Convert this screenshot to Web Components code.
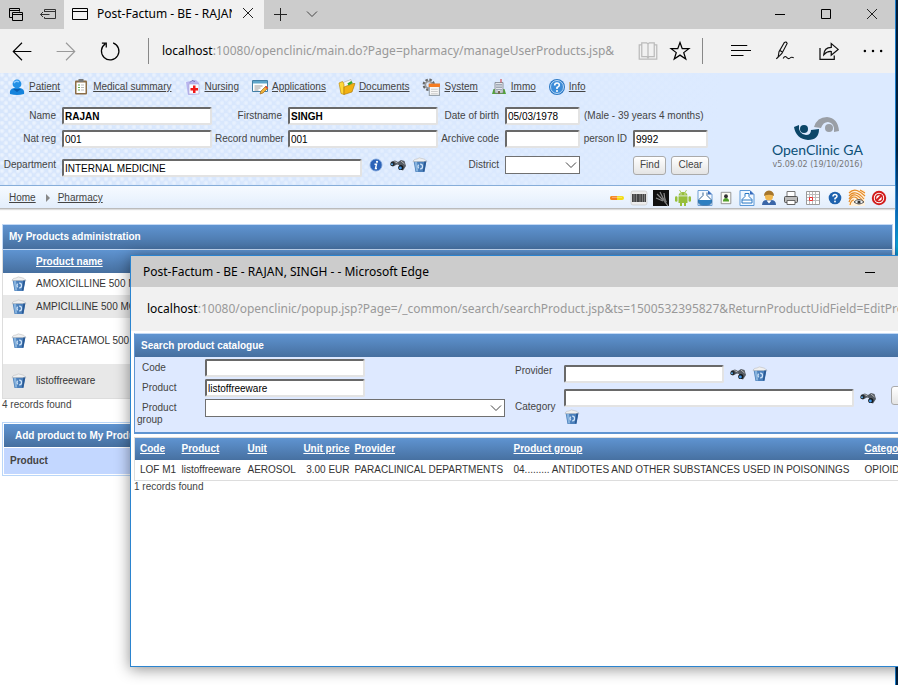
<!DOCTYPE html>
<html lang="en">
<head>
<meta charset="utf-8">
<title>OpenClinic GA</title>
<style>
    html, body {
        margin: 0;
        height: 100%;
        overflow: hidden;
    }

    body {
        font-family: "Liberation Sans", Arial, sans-serif;
        font-size: 10px;
        line-height: 12px;
        color: #444;
        background: linear-gradient(#001c38 0, #00203f 22%, #0a5fae 30%, #0aa0d0 36%, #0a5fae 50%, #00203f 97%);
    }
</style>
</head>
<body>
<desktop-screen>
    <edge-window>
        <edge-tabs title-text="Post-Factum - BE - RAJAN, SINGH"></edge-tabs>
        <edge-toolbar host-name="localhost" path=":10080/openclinic/main.do?Page=pharmacy/manageUserProducts.jsp&amp;"></edge-toolbar>
        <patient-header>
            <clinic-menu></clinic-menu>
            <patient-form></patient-form>
            <clinic-logo slot="logo"></clinic-logo>
        </patient-header>
        <clinic-bar></clinic-bar>
        <product-list></product-list>
        <add-product></add-product>
    </edge-window>
    <edge-popup slot="popup" host-name="localhost" path=":10080/openclinic/popup.jsp?Page=/_common/search/searchProduct.jsp&amp;ts=1500532395827&amp;ReturnProductUidField=EditProductUid">
        <span slot="title">Post-Factum - BE - RAJAN, SINGH - - Microsoft Edge</span>
        <search-form></search-form>
        <search-results></search-results>
    </edge-popup>
</desktop-screen>

<script>
const icons = {
    // browser chrome
    tabsAside: '<g fill="none" stroke="#000"><path d="M4.500 11.500h-3v-9h10v3M1.500 4.500h10"/><path d="M4.500 6.500h10v8h-10zM4.500 8.500h10"/></g>',
    setAside: '<g fill="none" stroke="#333"><path d="M4.500 6V3.500h11v9h-11V11M4.500 5.500h11M.5 8.500h9M3 6L.5 8.500 3 11"/></g>',
    page: '<path d="M.5 2.500h15v11H.5zM.5 5.500h15" fill="none" stroke="#000"/>',
    close: '<path d="M3 3l10 10M13 3L3 13" fill="none" stroke="#222"/>',
    plus: '<path d="M8.500 2v13M2 8.500h13" fill="none" stroke="#222"/>',
    chevron: '<path d="M3 5.500l5 5 5-5" fill="none" stroke="#444"/>',
    minimize: '<path d="M3 8.500h10" fill="none" stroke="#000"/>',
    maximize: '<path d="M3.500 3.500h9v9h-9z" fill="none" stroke="#000"/>',
    back: '<path d="M15.500 8.400H1M8 1.400L1 8.400l7 7" fill="none" stroke="#000" stroke-width=".9"/>',
    forward: '<path d="M.5 8.400H15M8 1.400l7 7-7 7" fill="none" stroke="#999" stroke-width=".9"/>',
    refresh: '<path d="M4.200 2.300A7 7 0 1 0 10.500 1.500M1.500 1.600h3.500v3.600" fill="none" stroke="#000" stroke-width="1"/>',
    book: '<path d="M3 1.500h4l1 1 1-1h4v11H9l-1 1-1-1H3zM8 2.500v11M3 3H1v11.500h14V3h-2" fill="none" stroke="#bbb"/>',
    star: '<path d="M8 1.200l1.800 4.900h5.300L11 9.300l1.600 5.100L8 11.300l-4.600 3.100L5 9.300.9 6.100h5.300z" fill="none" stroke="#000" stroke-width="1"/>',
    hub: '<path d="M0 3.600h13M0 7.600h16M0 11.600h10" fill="none" stroke="#000" stroke-width=".8"/>',
    pen: '<path d="M2.500 13l.700-4.500L7.500 1.200Q9 .2 9.700 2L5.500 10zM4 7.500l2 1.500M1 14.300l1.500-1.500M6.500 14c1.700-3 2.500-1 3.500-.300s1.500.6 2.300-.3 1.500-.4 2.700 0" fill="none" stroke="#111" stroke-width=".9"/>',
    share: '<path d="M.8 5.500v9.200h11.400v-3.200M3.800 11c.2-4 2.700-6 6-6V2l5.500 4.700-5.500 4.600V8.400c-3-.2-4.500.8-6 2.600z" fill="none" stroke="#111" stroke-width="1"/>',
    more: '<g fill="#000"><circle cx="1.500" cy="8" r="1"/><circle cx="8" cy="8" r="1"/><circle cx="14.500" cy="8" r="1"/></g>',

    // main menu
    patient: '<path d="M1 15q-1-5 4-6h6q5 1 4 6-7 2-14 0z" fill="#1583dc"/><circle cx="8" cy="5" r="4.400" fill="#2390e5"/><path d="M5 4q2-3 5-1" stroke="#8ccaff" fill="none" stroke-width="1.500"/><path d="M4 10l4 3 4-3" fill="#0a5eb0"/>',
    clipboard: '<rect x="2" y="1.500" width="12" height="14" rx="1" fill="#8c6d46"/><path d="M3.500 3.500h9v10.500h-9z" fill="#fff"/><path d="M5.500 0h5v3h-5z" fill="#777"/><path d="M5 6h2M5 8.500h2M5 11h2" stroke="#5fae4b"/><path d="M8 6h3M8 8.500h3M8 11h3" stroke="#bbb"/>',
    nursing: '<path d="M1 3l10-2 3 3v11l-11 1z" fill="#b9b5ee"/><path d="M4 5h10v10H4z" fill="#fbfbff" stroke="#a6a3d8" stroke-width=".600"/><path d="M8 6.500h2.500V9H13v2.500h-2.500V14H8v-2.500H5.500V9H8z" fill="#f01818"/><path d="M5 3.500l2-2 3 1" stroke="#7773b8" fill="none"/>',
    applications: '<path d="M.5 1.500h15v11H.5z" fill="#fff" stroke="#437fa5"/><path d="M1 2h14v2.500H1z" fill="#5fa6cb"/><path d="M2.500 7h8M2.500 9h6M2.500 11h4" stroke="#999"/><path d="M8 15l1-3 5-5 2 2-5 5z" fill="#f0b33c" stroke="#a06a1b" stroke-width=".7"/><path d="M13 8l1-1 2 2-1 1z" fill="#d44"/>',
    documents: '<path d="M3 4l9-3.500 2 8-8 4z" fill="#f7f7f7" stroke="#999" stroke-width=".5"/><path d="M0 4l3.500-1.500L5 5v10.500l-3-1z" fill="#ffd83a" stroke="#b98200" stroke-width=".6"/><path d="M5 8l9-3.500h2L13 13l-8 2.500z" fill="#f2b112" stroke="#a87400" stroke-width=".6"/><path d="M9 5.500l4-2.500" stroke="#37a52e" stroke-width="2.500"/>',
    system: '<circle cx="6" cy="6" r="4.200" fill="none" stroke="#666" stroke-width="2.600" stroke-dasharray="2 1.300"/><circle cx="6" cy="6" r="3" fill="none" stroke="#999" stroke-width="1.500"/><rect x="6.500" y="5.500" width="9" height="10" fill="#f6f6f6" stroke="#98a3ad"/><path d="M6 5h10v3H6z" fill="#f47b22"/><path d="M8 10h6M8 12h6M8 14h6" stroke="#ccc"/>',
    immo: '<path d="M1 15l1.500-5h11L15 15z" fill="#52a33a"/><path d="M4 3.500h8V14H4z" fill="#e4e7ec" stroke="#7b818b" stroke-width=".8"/><path d="M6 5v8M8 5v6M10 5v8" stroke="#5d6b80" stroke-dasharray="1.500 1"/><path d="M10 0v3.500" stroke="#c33"/><path d="M7 12h2v3H7z" fill="#765"/>',
    info: '<circle cx="8" cy="8" r="8" fill="#2b78c4"/><circle cx="8" cy="8" r="6.500" fill="#3c8cd8" stroke="#d6ebff" stroke-width=".8"/><path d="M5.700 6.500Q5.700 4 8 4t2.300 2.200Q10.300 7.300 8 8.500V10" fill="none" stroke="#fff" stroke-width="1.600"/><circle cx="8" cy="12" r="1" fill="#fff"/>',

    // form actions
    about: '<circle cx="8" cy="8" r="6" fill="#2c63b8" stroke="#7ea3d8" stroke-width=".8"/><circle cx="9" cy="4.800" r="1.100" fill="#fff"/><path d="M6.500 7.200h2l-1 4.300h1.500" fill="none" stroke="#fff" stroke-width="1.400"/>',
    binoculars: '<path d="M1.500 4.500l3.500-1 3 1.500 3-2 3.500 1L16 9l-3 4.500-4-1.500V8L7 7.500 3 9.500.5 8z" fill="#555b63"/><circle cx="2.500" cy="7" r="2.200" fill="#20262c"/><circle cx="2" cy="7.200" r="1" fill="#5aa9e8"/><circle cx="10.800" cy="10.500" r="2.600" fill="#14181c"/><circle cx="10.400" cy="11" r="1.400" fill="#3d97ea"/><path d="M4.500 4.500l3 1.500M11 4l3.500 3" stroke="#b5b5b5"/>',
    trash: '<path d="M1.500 3.500h13L12.500 15h-9z" fill="#4c80bb"/><path d="M2.500 4.500l1.700 10h2L5 4.500z" fill="#86b2dd"/><path d="M1 4.500Q2 1.500 5 2q2-2 5-.5 3 0 5 3z" fill="#f0f0f0" stroke="#b5b5b5" stroke-width=".500"/><circle cx="8.300" cy="9.500" r="2.300" fill="none" stroke="#cfe3f8" stroke-width="1.300" stroke-dasharray="3.400 1.400"/><path d="M12.300 4.500l-1.500 10h1.500l2-10z" fill="#2a5a95"/>',

    // shortcut bar
    pill: '<rect x="1" y="6" width="14" height="4" rx="2" fill="#f4dc14"/><path d="M8 6H3Q1 6 1 8t2 2h5z" fill="#f5811f"/><path d="M3 7.300h10" stroke="#fff" opacity=".4"/>',
    barcode: '<rect x="0" y="1" width="16" height="14" rx="2" fill="#ececec" stroke="#bbb" stroke-width=".5"/><path d="M1 4h14v8H1z" fill="#444"/><path d="M3 4v8M5.500 4v8M9 4v8M11.500 4v8M13.500 4v8" stroke="#999" stroke-width=".7"/>',
    hand: '<path d="M0 0h16v16H0z" fill="#111"/><path d="M10 11L3 8M10 10L4 4M11 10L7 2M12 10l-1-7M12 12l3 4" stroke="#8a8a8a" stroke-width="1.200" fill="none"/><path d="M9 9l3-1 2 4-2 1z" fill="#777"/>',
    android: '<g fill="#97bf3a"><path d="M3.500 5.500Q4 2 8 2t4.500 3.500z"/><rect x="3.500" y="6.300" width="9" height="6.700"/><rect x="0" y="6.300" width="2.500" height="5.500" rx="1.200"/><rect x="13.500" y="6.300" width="2.500" height="5.500" rx="1.200"/><rect x="5" y="12" width="2" height="4"/><rect x="9" y="12" width="2" height="4"/></g><path d="M4.500 0l1.500 2.500M11.500 0L10 2.500" stroke="#97bf3a" stroke-width=".8"/><path d="M5.500 4h1M9.500 4h1" stroke="#fff"/>',
    flask: '<path d="M1 .5h10l4 4v11H1z" fill="#f4f9ff" stroke="#6c9fd5"/><path d="M11 .5v4h4" fill="#3568bb"/><path d="M6 2.500v3L1.500 10q-1 5 4.500 5h4q5.500 0 4.500-5L10 5.500v-3" fill="#fff" stroke="#33628f"/><path d="M1.300 10h13.400q0 5-4.700 5H6q-4.700 0-4.700-5z" fill="#2e7fc1"/>',
    card: '<path d="M2.500 1.500h11v13h-11z" fill="#fcfcf4" stroke="#888"/><circle cx="8" cy="6" r="2.200" fill="#333"/><path d="M4.500 12q0-4 3.500-4t3.500 4z" fill="#52a02b"/>',
    bottle: '<path d="M1 .5h10l4 4v11H1z" fill="#f0f7ff" stroke="#5a98d8"/><path d="M11 .5v4h4" fill="#3568bb"/><path d="M6 3.500h4v3l3 3v3.500H3V9.500l3-3zM3 10h10" fill="#fff" stroke="#2a79c4"/>',
    nurse: '<path d="M1 15q0-5 5-5h4q5 0 5 5z" fill="#3a66a8"/><circle cx="8" cy="6.500" r="4" fill="#f0b850"/><path d="M3 6Q3 1 8 .5q5 .5 5 5.500Q8 3.500 3 6z" fill="#a5762c"/><path d="M5.500 10.500l2.500 3 2.500-3z" fill="#fff"/>',
    printer: '<path d="M4 1.500h8v5H4z" fill="#fff" stroke="#777"/><rect x="1.500" y="6.500" width="13" height="6" rx="1" fill="#bbb" stroke="#555"/><path d="M4 10.500h8v4H4z" fill="#fff" stroke="#666"/>',
    calendar: '<path d="M1.500 1.500h13v13h-13z" fill="#fff" stroke="#999"/><path d="M2 4.500h12M2 7.500h12M2 10.500h12M4.500 2v12M7.500 2v12M10.500 2v12" stroke="#bbb"/><path d="M4.500 7.500h3v3h-3z" fill="none" stroke="#e33"/>',
    help: '<circle cx="8" cy="8" r="6.300" fill="#1e62ae"/><path d="M6 6.500Q6 4.500 8 4.500t2 1.800Q10 7.300 8 8.500v1" fill="none" stroke="#fff" stroke-width="1.500"/><circle cx="8" cy="11.500" r=".9" fill="#fff"/>',
    finger: '<path d="M0 0h16v16H0z" fill="#fff1dc"/><path d="M0 3q4-4 8-2.500t8 5.500M0 6q3-4 7-3t8 6M0 9q3-5 6.500-4t7.500 6M0 12q2-5 5-5t5 4M1 15q1-5 4-5M11 0l5 3" stroke="#e58a26" fill="none" stroke-width="1.200"/><path d="M5 12q5-5 10 0-5 4-10 0z" fill="#e9eef2" stroke="#555"/><circle cx="10" cy="12" r="1.600" fill="#333"/>',
    stop: '<circle cx="8" cy="8" r="6.200" fill="#fff" stroke="#d21d1d" stroke-width="2"/><circle cx="8" cy="8" r="3.500" fill="none" stroke="#d21d1d" stroke-width="1.500"/><path d="M5 11l6-6" stroke="#d21d1d" stroke-width="2"/>'
};

// shared by every shadow root with text fields in it
const controlStyles = `
    input, select, button {
        box-sizing: border-box;
        margin: 0;
        font: inherit;
    }

    input {
        width: 100%;
        height: 18px;
        padding: 0 1px;
        color: #000;
        background: #fff;
        border: 2px solid;
        border-color: #696969 #e3e3e3 #e3e3e3 #696969;
        border-radius: 2px;
    }

    .drop {
        display: grid;
        align-items: center;
    }

    .drop select, .drop clinic-icon {
        grid-area: 1 / 1;
    }

    .drop select {
        width: 100%;
        height: 18px;
        appearance: none;
        background: #fff;
        border: 1px solid #707070;
        border-radius: 0;
    }

    .drop clinic-icon {
        justify-self: end;
        margin-right: 1px;
        pointer-events: none;
    }

    .button {
        height: 19px;
        padding: 0 6px;
        color: #444;
        background: linear-gradient(#fff, #e4e4e4);
        border: 1px solid #aaa;
        border-radius: 3px;
    }

    .icon-button {
        display: block;
        padding: 0;
        background: none;
        border: 0;
    }
`;

const tableStyles = `
    table {
        width: 100%;
        border-collapse: collapse;
    }

    th, td {
        padding: 0 5px;
        text-align: left;
        white-space: nowrap;
    }

    th {
        color: #fff;
        font-weight: bold;
    }

    th a {
        color: inherit;
    }

    td {
        color: #333;
    }
`;

class ClinicIcon extends HTMLElement {
    connectedCallback(){
        this.attachShadow({mode: "open"});
        const size = this.getAttribute("size") || 16;
        this.shadowRoot.innerHTML = `
        <style>
            :host {
                display: block;
                flex: none;
                width: ${size}px;
                height: ${size}px;
            }

            svg {
                display: block;
                overflow: visible;
            }
        </style>
        <svg width="${size}" height="${size}" viewBox="0 0 16 16" aria-hidden="true">${icons[this.getAttribute("name")]}</svg>
        `;
    }
}

class DesktopScreen extends HTMLElement {
    connectedCallback(){
        this.attachShadow({mode: "open"}).innerHTML = `
        <style>
            :host {
                display: block;
                position: relative;
                min-height: 100vh;
                overflow: hidden;
            }

            ::slotted(edge-popup) {
                position: absolute;
                top: 255px;
                left: 130px;
                right: -88px;
            }
        </style>
        <slot></slot>
        <slot name="popup"></slot>
        `;
    }
}

class EdgeWindow extends HTMLElement {
    connectedCallback(){
        this.attachShadow({mode: "open"}).innerHTML = `
        <style>
            :host {
                display: block;
                box-sizing: border-box;
                min-height: 100vh;
                margin-right: 2px;
                background: #fff;
                border-right: 1px solid #1b7cc8;
            }
        </style>
        <slot></slot>
        `;
    }
}

class EdgeTabs extends HTMLElement {
    connectedCallback(){
        this.attachShadow({mode: "open"}).innerHTML = `
        <style>
            :host {
                display: flex;
                height: 29px;
                background: #ccc;
                font: 12px/16px "Noto Sans", sans-serif;
                color: #000;
            }

            button {
                display: grid;
                place-items: center;
                width: 32px;
                padding: 0 0 2px;
                background: none;
                border: 0;
            }

            .tab {
                display: flex;
                align-items: center;
                box-sizing: border-box;
                width: 200px;
                padding: 0 0 2px 8px;
                background: #f1f1f1;
            }

            .title {
                flex: 1;
                margin-left: 9px;
                overflow: hidden;
                white-space: nowrap;
            }

            .window {
                display: flex;
                margin-left: auto;
            }

            .window button {
                width: 46px;
            }
        </style>
        <button aria-label="Tabs aside"><clinic-icon name="tabsAside"></clinic-icon></button>
        <button aria-label="Set aside"><clinic-icon name="setAside"></clinic-icon></button>
        <div class="tab">
            <clinic-icon name="page"></clinic-icon>
            <span class="title">${this.getAttribute("title-text")}</span>
            <button aria-label="Close tab"><clinic-icon name="close"></clinic-icon></button>
        </div>
        <button aria-label="New tab"><clinic-icon name="plus"></clinic-icon></button>
        <button aria-label="Tab previews"><clinic-icon name="chevron"></clinic-icon></button>
        <div class="window">
            <button aria-label="Minimize"><clinic-icon name="minimize"></clinic-icon></button>
            <button aria-label="Maximize"><clinic-icon name="maximize"></clinic-icon></button>
            <button aria-label="Close"><clinic-icon name="close"></clinic-icon></button>
        </div>
        `;
    }
}

class EdgeToolbar extends HTMLElement {
    connectedCallback(){
        this.attachShadow({mode: "open"}).innerHTML = `
        <style>
            :host {
                display: flex;
                align-items: center;
                height: 44px;
                background: #f1f1f1;
                font: 12px/18px "Noto Sans", sans-serif;
                color: #000;
            }

            button {
                display: grid;
                place-items: center;
                width: 44px;
                height: 44px;
                padding: 0;
                background: none;
                border: 0;
            }

            .narrow {
                width: 32px;
            }

            .url {
                flex: 1;
                min-width: 0;
                margin: 0 12px 0 16px;
                padding: 4px 0 4px 13px;
                overflow: hidden;
                white-space: nowrap;
                border-left: 1px solid #888;
            }

            .path {
                color: #999;
            }

            .actions {
                display: flex;
                align-items: center;
                height: 26px;
                margin-left: 6px;
                padding-left: 16px;
                border-left: 1px solid #888;
            }
        </style>
        <button aria-label="Back"><clinic-icon name="back" size="20"></clinic-icon></button>
        <button aria-label="Forward"><clinic-icon name="forward" size="20"></clinic-icon></button>
        <button aria-label="Refresh"><clinic-icon name="refresh" size="20"></clinic-icon></button>
        <div class="url">${this.getAttribute("host-name")}<span class="path">${this.getAttribute("path").replace(/&/g, "&amp;")}</span></div>
        <button class="narrow" aria-label="Reading view"><clinic-icon name="book" size="20"></clinic-icon></button>
        <button class="narrow" aria-label="Favourite"><clinic-icon name="star" size="20"></clinic-icon></button>
        <div class="actions">
            <button aria-label="Hub"><clinic-icon name="hub" size="20"></clinic-icon></button>
            <button aria-label="Web note"><clinic-icon name="pen" size="20"></clinic-icon></button>
            <button aria-label="Share"><clinic-icon name="share" size="20"></clinic-icon></button>
            <button aria-label="More"><clinic-icon name="more" size="20"></clinic-icon></button>
        </div>
        `;
    }
}

class PatientHeader extends HTMLElement {
    connectedCallback(){
        this.attachShadow({mode: "open"}).innerHTML = `
        <style>
            :host {
                display: flex;
                justify-content: space-between;
                padding: 4px 32px 8px 0;
                background:
                    linear-gradient(100deg, rgba(220, 234, 255, 0) 0, rgba(220, 234, 255, .5) 45%, #dceaff 80%),
                    radial-gradient(circle at 2px 2px, rgba(255, 255, 255, .5) 1px, transparent 3px) 0 0 / 8px 8px,
                    radial-gradient(circle at 6px 6px, rgba(255, 255, 255, .5) 1px, transparent 3px) 0 0 / 8px 8px,
                    #d7e6fc;
            }
        </style>
        <div><slot></slot></div>
        <slot name="logo"></slot>
        `;
    }
}

class ClinicMenu extends HTMLElement {
    connectedCallback(){
        const entries = [
            ["patient", "Patient"],
            ["clipboard", "Medical summary"],
            ["nursing", "Nursing"],
            ["applications", "Applications"],
            ["documents", "Documents"],
            ["system", "System", 18],
            ["immo", "Immo"],
            ["info", "Info"]
        ];
        this.attachShadow({mode: "open"}).innerHTML = `
        <style>
            :host {
                display: flex;
                align-items: center;
                gap: 13px;
                height: 20px;
                padding-left: 9px;
            }

            a {
                display: flex;
                align-items: center;
                gap: 4px;
                color: #444;
            }
        </style>
        ${entries.map(([icon, text, size]) => `<a href="#"><clinic-icon name="${icon}" size="${size || 16}"></clinic-icon>${text}</a>`).join("")}
        `;
    }
}

class PatientForm extends HTMLElement {
    connectedCallback(){
        this.attachShadow({mode: "open"}).innerHTML = `
        <style>
            ${controlStyles}

            :host {
                display: block;
                margin-top: 10px;
            }

            form {
                display: grid;
                grid-template-columns: 59px 150px 70px 150px 61px 75px 47px 75px;
                grid-template-rows: 18px 18px 24px;
                gap: 5px 3px;
                align-items: center;
            }

            label {
                padding-right: 3px;
                text-align: right;
                white-space: nowrap;
            }

            .age {
                grid-column: span 2;
                padding-left: 1px;
            }

            .name {
                font-weight: bold;
            }

            .department {
                display: flex;
                grid-column: span 3;
                align-items: center;
                align-self: stretch;
                gap: 6px;
            }

            .department input {
                width: 300px;
                align-self: end;
            }

            .buttons {
                display: flex;
                grid-column: 8;
                gap: 5px;
            }
        </style>
        <form>
            <label for="name">Name</label>
            <input id="name" class="name" value="RAJAN">
            <label for="firstname">Firstname</label>
            <input id="firstname" class="name" value="SINGH">
            <label for="birth">Date of birth</label>
            <input id="birth" value="05/03/1978">
            <span class="age">(Male - 39 years 4 months)</span>

            <label for="natreg">Nat reg</label>
            <input id="natreg" value="001">
            <label for="record">Record number</label>
            <input id="record" value="001">
            <label for="archive">Archive code</label>
            <input id="archive">
            <label for="person">person ID</label>
            <input id="person" value="9992">

            <label for="department">Department</label>
            <div class="department">
                <input id="department" value="INTERNAL MEDICINE">
                <button type="button" class="icon-button" aria-label="Details"><clinic-icon name="about"></clinic-icon></button>
                <button type="button" class="icon-button" aria-label="Search"><clinic-icon name="binoculars"></clinic-icon></button>
                <button type="button" class="icon-button" aria-label="Erase"><clinic-icon name="trash"></clinic-icon></button>
            </div>
            <label for="district">District</label>
            <div class="drop">
                <select id="district"><option></option></select>
                <clinic-icon name="chevron"></clinic-icon>
            </div>
            <div class="buttons">
                <button type="button" class="button">Find</button>
                <button type="button" class="button">Clear</button>
            </div>
        </form>
        `;
    }
}

class ClinicLogo extends HTMLElement {
    connectedCallback(){
        this.attachShadow({mode: "open"}).innerHTML = `
        <style>
            :host {
                display: flex;
                flex-direction: column;
                align-items: center;
                padding-top: 40px;
                white-space: nowrap;
            }

            .brand {
                font: 14px/18px Lato, sans-serif;
                color: #0b4f76;
            }

            .version {
                font: 8px/12px "DejaVu Sans", sans-serif;
                color: #777;
            }
        </style>
        <svg width="46" height="24" viewBox="0 0 46 24" aria-hidden="true">
            <path d="M0 10L5 8Q4 17 12 18 17 18 17 13L25 12Q25 23 14 23 2 22 0 10z" fill="#0b4668"/>
            <circle cx="10" cy="12" r="4" fill="#0b4668"/>
            <path d="M20 10Q23 0 33 0 44 1 45 14L40 15Q41 6 34 5 29 5 27 11z" fill="#9a9fa6"/>
            <circle cx="35" cy="11" r="4" fill="#9a9fa6"/>
        </svg>
        <span class="brand">OpenClinic GA</span>
        <span class="version">v5.09.02 (19/10/2016)</span>
        `;
    }
}

class ClinicBar extends HTMLElement {
    connectedCallback(){
        const shortcuts = ["pill", "barcode", "hand", "android", "flask", "card", "bottle", "nurse", "printer", "calendar", "help", "finger", "stop"];
        this.attachShadow({mode: "open"}).innerHTML = `
        <style>
            ${controlStyles}

            :host {
                display: flex;
                align-items: center;
                justify-content: space-between;
                height: 20px;
                padding: 2px 8px 0 9px;
                background: linear-gradient(#f6faff, #e3eefc);
                border-top: 1px solid #86add9;
                border-bottom: 1px solid #bbb;
                box-shadow: 0 1px 1px #ddd;
            }

            nav, .shortcuts {
                display: flex;
                align-items: center;
            }

            nav {
                gap: 8px;
            }

            a {
                color: #444;
            }

            .arrow {
                margin-left: 2px;
                border: 4px solid transparent;
                border-left-color: #888;
                border-right-width: 0;
            }

            .shortcuts {
                gap: 6px;
            }
        </style>
        <nav><a href="#">Home</a><span class="arrow"></span><a href="#">Pharmacy</a></nav>
        <div class="shortcuts">
            ${shortcuts.map(name => `<button class="icon-button" aria-label="${name}"><clinic-icon name="${name}" size="${name == "card" ? 14 : 16}"></clinic-icon></button>`).join("")}
        </div>
        `;
    }
}

class ProductList extends HTMLElement {
    connectedCallback(){
        const products = [
            ["AMOXICILLINE 500 MG", 22],
            ["AMPICILLINE 500 MG", 23],
            ["PARACETAMOL 500 MG", 46],
            ["listoffreeware", 34]
        ];
        this.attachShadow({mode: "open"}).innerHTML = `
        <style>
            ${controlStyles}
            ${tableStyles}

            :host {
                display: block;
                margin: 15px 2px 0;
            }

            h2 {
                margin: 0;
                padding: 6px;
                font-size: 10px;
                line-height: 12px;
                color: #fff;
                background: linear-gradient(#5f94d1, #466f9f);
                border: 1px solid #c3d9f5;
            }

            table {
                border: 1px solid #ddd;
                border-top: 0;
            }

            thead {
                background: linear-gradient(#5f94d1, #466f9f);
            }

            th {
                height: 23px;
            }

            tbody tr:nth-child(even) {
                background: #e8e8e8;
            }

            .action {
                width: 20px;
                padding: 0 0 0 8px;
            }

            p {
                margin: 0;
            }
        </style>
        <h2>My Products administration</h2>
        <table>
            <thead><tr><th class="action"></th><th><a href="#">Product name</a></th></tr></thead>
            <tbody>
                ${products.map(([name, height]) => `
                <tr style="height: ${height}px">
                    <td class="action"><button class="icon-button" aria-label="Delete ${name}"><clinic-icon name="trash"></clinic-icon></button></td>
                    <td>${name}</td>
                </tr>`).join("")}
            </tbody>
        </table>
        <p>4 records found</p>
        `;
    }
}

class AddProduct extends HTMLElement {
    connectedCallback(){
        this.attachShadow({mode: "open"}).innerHTML = `
        <style>
            :host {
                display: block;
                margin: 11px 2px 0;
                padding: 1px;
                border: 1px solid #b9d6f8;
            }

            h2, div {
                margin: 0;
                font-size: 10px;
                font-weight: bold;
                line-height: 12px;
            }

            h2 {
                padding: 6px 11px 5px;
                color: #fff;
                background: linear-gradient(#5f94d1, #466f9f);
            }

            div {
                margin-top: 1px;
                padding: 7px 6px;
                background: #c3d7ff;
            }
        </style>
        <h2>Add product to My Products</h2>
        <div>Product</div>
        `;
    }
}

class EdgePopup extends HTMLElement {
    connectedCallback(){
        this.attachShadow({mode: "open"}).innerHTML = `
        <style>
            :host {
                display: block;
                box-sizing: border-box;
                min-height: 412px;
                background: #fff;
                border: 1px solid #2b84cf;
                box-shadow: 0 2px 14px rgba(0, 0, 0, .45);
                font-family: "Liberation Sans", Arial, sans-serif;
            }

            header {
                display: flex;
                align-items: center;
                justify-content: space-between;
                height: 31px;
                padding-left: 12px;
                background: #ccc;
                font: 12px/16px "Noto Sans", sans-serif;
                color: #000;
            }

            .window {
                display: flex;
            }

            button {
                display: grid;
                place-items: center;
                width: 46px;
                padding: 0;
                background: none;
                border: 0;
            }

            .url {
                padding: 13px 16px;
                background: #f1f1f1;
                font: 12px/18px "Noto Sans", sans-serif;
                color: #000;
                white-space: nowrap;
            }

            .path {
                color: #999;
            }

            main {
                padding: 2px 3px;
            }
        </style>
        <header>
            <slot name="title"></slot>
            <div class="window">
                <button aria-label="Minimize"><clinic-icon name="minimize"></clinic-icon></button>
                <button aria-label="Maximize"><clinic-icon name="maximize"></clinic-icon></button>
                <button aria-label="Close"><clinic-icon name="close"></clinic-icon></button>
            </div>
        </header>
        <div class="url">${this.getAttribute("host-name")}<span class="path">${this.getAttribute("path").replace(/&/g, "&amp;")}</span></div>
        <main><slot></slot></main>
        `;
    }
}

class SearchForm extends HTMLElement {
    connectedCallback(){
        this.attachShadow({mode: "open"}).innerHTML = `
        <style>
            ${controlStyles}

            :host {
                display: block;
                background: #dee9ff;
                border: 1px solid #c3d9f5;
                border-left: 1px solid #5f94d1;
                border-bottom: 2px solid #5f94d1;
            }

            h2 {
                margin: 0;
                padding: 6px 6px 5px;
                font-size: 10px;
                line-height: 12px;
                color: #fff;
                background: linear-gradient(#5f94d1, #466f9f);
            }

            form {
                display: grid;
                grid-template-columns: 68px 300px 59px 322px 1fr;
                padding: 2px 2px 1px;
            }

            .labels, .fields {
                display: grid;
                grid-template-rows: 20px 20px 32px;
            }

            .labels label {
                padding: 3px 12px 0 0;
                text-indent: 5px;
            }

            .fields input {
                width: 160px;
            }

            .fields .drop {
                align-self: start;
            }

            .right {
                display: grid;
                grid-template-rows: 24px 42px;
                padding-top: 6px;
            }

            .right label {
                padding-left: 10px;
            }

            .right label + label {
                padding-top: 12px;
            }

            .line {
                display: flex;
                flex-wrap: wrap;
                align-items: center;
                align-content: start;
                gap: 2px 6px;
            }

            .line input {
                width: 160px;
            }

            .line .wide {
                width: 290px;
            }

            .submit {
                align-self: center;
                justify-self: start;
                margin-left: 5px;
            }
        </style>
        <h2>Search product catalogue</h2>
        <form>
            <div class="labels">
                <label for="code">Code</label>
                <label for="product">Product</label>
                <label for="group">Product group</label>
            </div>
            <div class="fields">
                <input id="code">
                <input id="product" value="listoffreeware">
                <div class="drop">
                    <select id="group"><option></option></select>
                    <clinic-icon name="chevron"></clinic-icon>
                </div>
            </div>
            <div class="right">
                <label for="provider">Provider</label>
                <label for="category">Category</label>
            </div>
            <div class="right">
                <div class="line">
                    <input id="provider">
                    <button type="button" class="icon-button" aria-label="Search provider"><clinic-icon name="binoculars"></clinic-icon></button>
                    <button type="button" class="icon-button" aria-label="Erase provider"><clinic-icon name="trash"></clinic-icon></button>
                </div>
                <div class="line">
                    <input id="category" class="wide">
                    <button type="button" class="icon-button" aria-label="Search category"><clinic-icon name="binoculars"></clinic-icon></button>
                    <button type="button" class="icon-button" aria-label="Erase category"><clinic-icon name="trash"></clinic-icon></button>
                </div>
            </div>
            <button type="button" class="button submit">Search</button>
        </form>
        `;
    }
}

class SearchResults extends HTMLElement {
    connectedCallback(){
        this.attachShadow({mode: "open"}).innerHTML = `
        <style>
            ${tableStyles}

            :host {
                display: block;
                margin-top: 3px;
            }

            table {
                table-layout: fixed;
                border: 1px solid #ddd;
            }

            thead {
                background: linear-gradient(#5f94d1, #466f9f);
            }

            th, td {
                height: 22px;
            }

            td {
                height: 20px;
            }

            .price {
                padding: 0;
                text-align: right;
            }

            p {
                margin: 0;
            }
        </style>
        <table>
            <colgroup>
                <col style="width: 42px"><col style="width: 66px"><col style="width: 56px"><col style="width: 51px">
                <col style="width: 159px"><col style="width: 351px"><col>
            </colgroup>
            <thead>
                <tr>
                    <th><a href="#">Code</a></th>
                    <th><a href="#">Product</a></th>
                    <th><a href="#">Unit</a></th>
                    <th class="price"><a href="#">Unit price</a></th>
                    <th><a href="#">Provider</a></th>
                    <th><a href="#">Product group</a></th>
                    <th><a href="#">Category</a></th>
                </tr>
            </thead>
            <tbody>
                <tr>
                    <td>LOF M1</td>
                    <td>listoffreeware</td>
                    <td>AEROSOL</td>
                    <td class="price">3.00 EUR</td>
                    <td>PARACLINICAL DEPARTMENTS</td>
                    <td>04......... ANTIDOTES AND OTHER SUBSTANCES USED IN POISONINGS</td>
                    <td>OPIOIDS</td>
                </tr>
            </tbody>
        </table>
        <p>1 records found</p>
        `;
    }
}

customElements.define("clinic-icon", ClinicIcon);
customElements.define("desktop-screen", DesktopScreen);
customElements.define("edge-window", EdgeWindow);
customElements.define("edge-tabs", EdgeTabs);
customElements.define("edge-toolbar", EdgeToolbar);
customElements.define("patient-header", PatientHeader);
customElements.define("clinic-menu", ClinicMenu);
customElements.define("patient-form", PatientForm);
customElements.define("clinic-logo", ClinicLogo);
customElements.define("clinic-bar", ClinicBar);
customElements.define("product-list", ProductList);
customElements.define("add-product", AddProduct);
customElements.define("edge-popup", EdgePopup);
customElements.define("search-form", SearchForm);
customElements.define("search-results", SearchResults);
</script>
</body>
</html>
